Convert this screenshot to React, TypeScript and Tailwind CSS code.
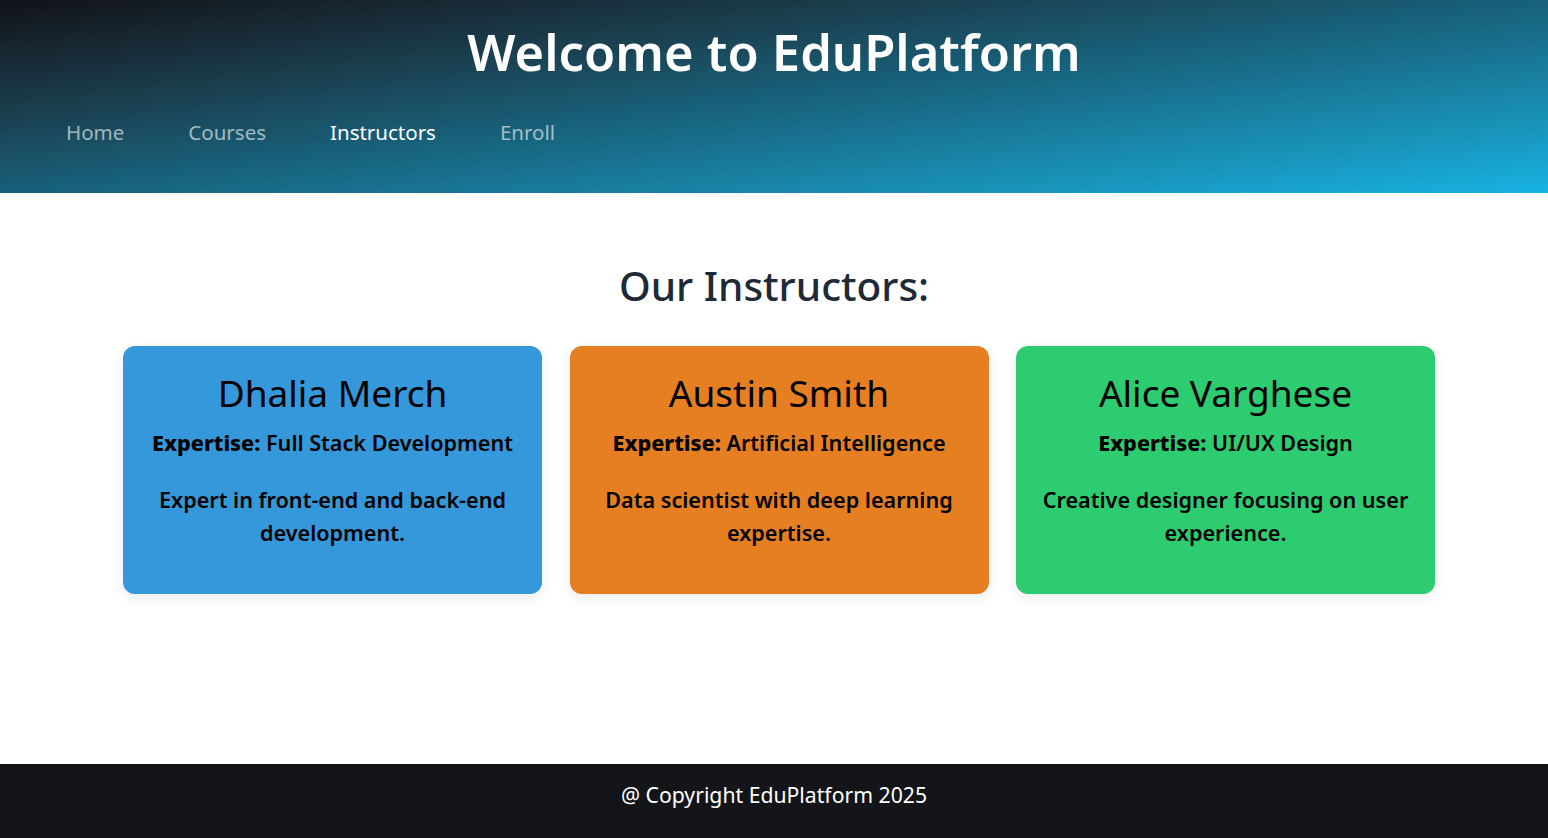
import React from "react";

interface Instructor {
  name: string;
  expertise: string;
  bio: string;
  color: string;
}

const instructors: Instructor[] = [
  {
    name: "Dhalia Merch",
    expertise: "Full Stack Development",
    bio: "Expert in front-end and back-end development.",
    color: "bg-[#3498db]",
  },
  {
    name: "Austin Smith",
    expertise: "Artificial Intelligence",
    bio: "Data scientist with deep learning expertise.",
    color: "bg-[#e67e22]",
  },
  {
    name: "Alice Varghese",
    expertise: "UI/UX Design",
    bio: "Creative designer focusing on user experience.",
    color: "bg-[#2ecc71]",
  },
];

const navLinks = ["Home", "Courses", "Instructors", "Enroll"];

export default function App() {
  const active = "Instructors";

  return (
    <div className="flex min-h-screen flex-col bg-white font-['Noto_Sans',sans-serif]">
      {/* Header */}
      <header className="h-[193px] bg-gradient-to-br from-[#111318] via-[#176079] to-[#17b2e2] text-white">
        <h1 className="pt-[22px] text-center text-[50.7px] font-semibold leading-[60px]">
          Welcome to EduPlatform
        </h1>
        <nav className="mt-[35px] flex gap-[64px] pl-[66px]">
          {navLinks.map((link) => (
            <a
              key={link}
              href="#"
              className={`text-[20.5px] leading-[30px] ${
                link === active ? "text-white" : "text-white/60"
              }`}
            >
              {link}
            </a>
          ))}
        </nav>
      </header>

      {/* Instructors */}
      <main className="flex-1">
        <h2 className="mt-[68px] text-center text-[40.5px] font-medium leading-[50px] text-[#1f2a37]">
          Our Instructors:
        </h2>
        <div className="mt-[35px] flex gap-[27.5px] pl-[123px]">
          {instructors.map((item) => (
            <div
              key={item.name}
              className={`h-[248px] w-[419px] rounded-xl px-5 pt-[25px] text-center text-black shadow-[0_4px_14px_rgba(0,0,0,0.08)] ${item.color}`}
            >
              <h3 className="text-[37px] font-normal leading-[44px]">{item.name}</h3>
              <p className="mt-[13px] text-[21.6px] font-semibold leading-[30px]">
                <strong className="font-extrabold">Expertise:</strong> {item.expertise}
              </p>
              <p className="mt-[25px] text-[21.6px] font-semibold leading-[33px]">{item.bio}</p>
            </div>
          ))}
        </div>
      </main>

      {/* Footer */}
      <footer className="h-[74px] bg-[#141518] pt-[16px] text-center text-[21.2px] leading-[30px] text-white">
        @ Copyright EduPlatform 2025
      </footer>
    </div>
  );
}
